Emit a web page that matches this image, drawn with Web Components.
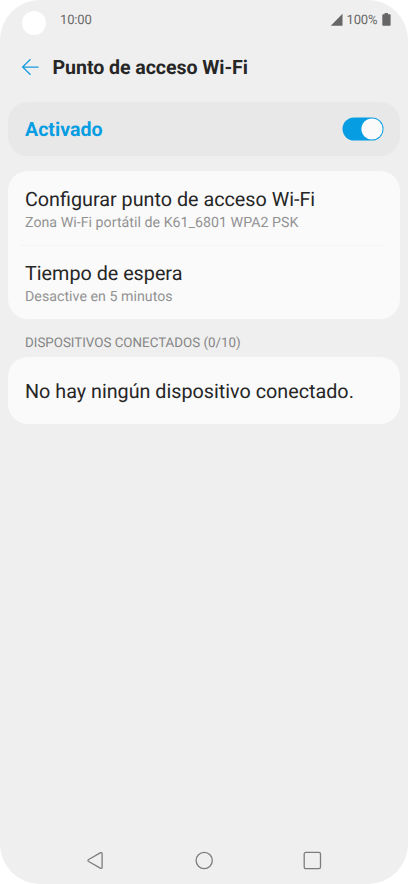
<!DOCTYPE html>
<html lang="es">
<head>
<meta charset="utf-8">
<title>Punto de acceso Wi-Fi</title>
<style>
html, body { margin: 0; background: #fff; }
body { font-family: Roboto, "Liberation Sans", sans-serif; color: #262626; text-rendering: geometricPrecision; }
</style>
</head>
<body>
<phone-screen>
  <status-bar slot="status" time="10:00" battery="100%"></status-bar>
  <title-bar slot="title">Punto de acceso Wi-Fi</title-bar>
  <switch-card>Activado</switch-card>
  <settings-card style="--h:148px">
    <settings-row>Configurar punto de acceso Wi-Fi<span slot="sub">Zona Wi-Fi portátil de K61_6801 WPA2 PSK</span></settings-row>
    <settings-row divided>Tiempo de espera<span slot="sub">Desactive en 5 minutos</span></settings-row>
  </settings-card>
  <section-label>DISPOSITIVOS CONECTADOS (0/10)</section-label>
  <settings-card style="--h:67px">
    <settings-row>No hay ningún dispositivo conectado.</settings-row>
  </settings-card>
  <nav-bar slot="nav"></nav-bar>
</phone-screen>
<script>
function component(name, markup, ready) {
  customElements.define(name, class extends HTMLElement {
    constructor() {
      super();
      this.attachShadow({ mode: "open" }).innerHTML = markup;
    }
    connectedCallback() { if (ready) ready(this); }
  });
}

component("phone-screen", `
<style>
:host { display: flex; flex-direction: column; width: 408px; height: 884px; background: #efefef; border-radius: 40px; overflow: hidden; }
main { flex: 1; padding: 0 8px; }
</style>
<slot name="status"></slot><slot name="title"></slot>
<main><slot></slot></main>
<slot name="nav"></slot>`);

component("status-bar", `
<style>
:host { display: flex; box-sizing: border-box; height: 41px; padding: 11px 17.5px 0 22px; font-size: 13px; line-height: 20px; color: #686868; }
.camera { width: 24px; height: 24px; border-radius: 50%; background: #fff; margin-right: 14px; }
.time { flex: 1; letter-spacing: -.15px; }
.battery { letter-spacing: -.1px; margin: 0 4px 0 3px; }
svg { display: block; }
.signal, .cell { margin-top: 2px; }
</style>
<div class="camera"></div>
<div class="time"></div>
<svg class="signal" width="13" height="13"><path d="M.8 12.7 12.5.7v12z" fill="#666"/></svg>
<div class="battery"></div>
<svg class="cell" width="9" height="13"><path d="M2.6 0h3.3v1.2H8q.6 0 .6.7v10q0 .8-.8.8H1.1q-.8 0-.8-.8v-10q0-.7.8-.7h1.5z" fill="#666"/></svg>`,
el => {
  el.shadowRoot.querySelector(".time").textContent = el.getAttribute("time");
  el.shadowRoot.querySelector(".battery").textContent = el.getAttribute("battery");
});

component("title-bar", `
<style>
:host { display: flex; align-items: center; height: 52px; margin-bottom: 9px; padding-left: 21px; }
h1 { margin: 0 0 0 11.5px; padding-top: 2px; font-size: 19.6px; line-height: 24px; font-weight: 700; letter-spacing: -.07px; }
svg { display: block; }
</style>
<svg width="20" height="18" fill="none" stroke="#169bdf" stroke-width="1.25"><path d="M17.5 9H1.6M9.5 1.2 1.6 9l7.9 7.8"/></svg>
<h1><slot></slot></h1>`);

component("switch-card", `
<style>
:host { display: flex; align-items: center; justify-content: space-between; box-sizing: border-box; height: 54px; margin-bottom: 15px; padding: 0 16px 0 17px; border-radius: 20px; background: #e8e8e8; font-size: 19.6px; line-height: 24px; font-weight: 700; color: #079de2; }
div { padding-top: 2px; }
svg { display: block; }
</style>
<div><slot></slot></div>
<svg width="42" height="24"><rect x=".5" y=".5" width="41" height="23" rx="11.5" fill="#079de2"/><circle cx="30" cy="12" r="10.6" fill="#fafafa"/></svg>`);

component("settings-card", `
<style>
:host { display: flex; flex-direction: column; box-sizing: border-box; height: var(--h); padding: 0 14px 0 13px; border-radius: 20px; background: #fafafa; }
::slotted(*) { flex: 1; }
</style>
<slot></slot>`);

component("settings-row", `
<style>
:host { display: flex; flex-direction: column; justify-content: center; box-sizing: border-box; padding: 2px 0 0 4px; font-size: 19.75px; line-height: 26px; border-top: 1px solid transparent; }
:host([divided]) { border-top-color: #f4f4f4; }
::slotted(span) { font-size: 14.2px; line-height: 20px; letter-spacing: .03px; color: #929292; }
</style>
<div><slot></slot></div>
<slot name="sub"></slot>`);

component("section-label", `
<style>
:host { display: block; box-sizing: border-box; height: 38px; padding: 16px 0 0 17px; font-size: 13.35px; line-height: 18px; color: #858585; }
</style>
<slot></slot>`);

component("nav-bar", `
<style>
:host { display: grid; grid-template-columns: repeat(3, 20px); justify-content: center; gap: 88.5px; height: 34px; margin-right: 1px; }
svg { display: block; fill: none; stroke: #7c7c7c; stroke-width: 1.3; }
</style>
<svg width="20" height="20"><path d="M3.7 9.5 15.2 2.9q1.9-.9 1.9.9v13.4q0 1.8-1.9.9L3.7 11.5q-1.6-1 0-2z"/></svg>
<svg width="20" height="20"><circle cx="10.2" cy="10.5" r="8.1"/></svg>
<svg width="20" height="20"><rect x="2.2" y="2.4" width="16.3" height="16.3" rx="1.6"/></svg>`);
</script>
</body>
</html>
